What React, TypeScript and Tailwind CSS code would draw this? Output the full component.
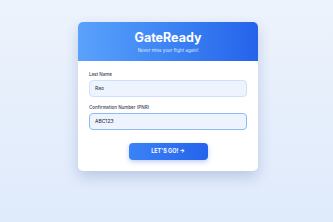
export default function App() {
  return (
    <div
      className="flex h-[222px] w-[333px] items-start justify-center bg-gradient-to-b from-[#edf3fc] to-[#dfeafb] pt-[22px] pl-[3px]"
      style={{ fontFamily: "Inter, 'Noto Sans', sans-serif" }}
    >
      <div className="w-[180px] overflow-hidden rounded-[5px] bg-white shadow-[0_6px_14px_rgba(30,58,138,0.2)]">
        <div className="flex h-[39px] flex-col items-center justify-center bg-gradient-to-r from-[#5aa2fb] to-[#2563eb]">
          <h1 className="text-[12.5px] leading-[16px] font-bold text-white">GateReady</h1>
          <p className="mt-[2px] text-[4.5px] leading-[6px] text-blue-100">Never miss your flight again!</p>
        </div>
        <div className="flex flex-col px-[11px] pt-[11px] pb-[11px]">
          <label className="text-[4.5px] leading-[6px] font-medium text-gray-700">Last Name</label>
          <div className="mt-[2px] flex h-[17px] items-center rounded-[4px] border border-[#cfe0fb] bg-[#eef4fe] px-[5px] text-[5px] text-gray-800">
            Rao
          </div>
          <label className="mt-[8px] text-[4.5px] leading-[6px] font-medium text-gray-700">Confirmation Number (PNR)</label>
          <div className="mt-[2px] flex h-[17px] items-center rounded-[4px] border-[1.5px] border-[#8fbaf7] bg-[#eef4fe] px-[5px] text-[5px] text-gray-800">
            ABC123
          </div>
          <div className="mt-[13px] flex justify-center">
            <button className="flex h-[17px] w-[79px] items-center justify-center rounded-[4px] bg-gradient-to-r from-[#3b82f6] to-[#2563eb] text-[5.5px] font-bold text-white shadow-[0_2px_5px_rgba(37,99,235,0.3)]">
              LET'S GO! →
            </button>
          </div>
        </div>
      </div>
    </div>
  );
}
